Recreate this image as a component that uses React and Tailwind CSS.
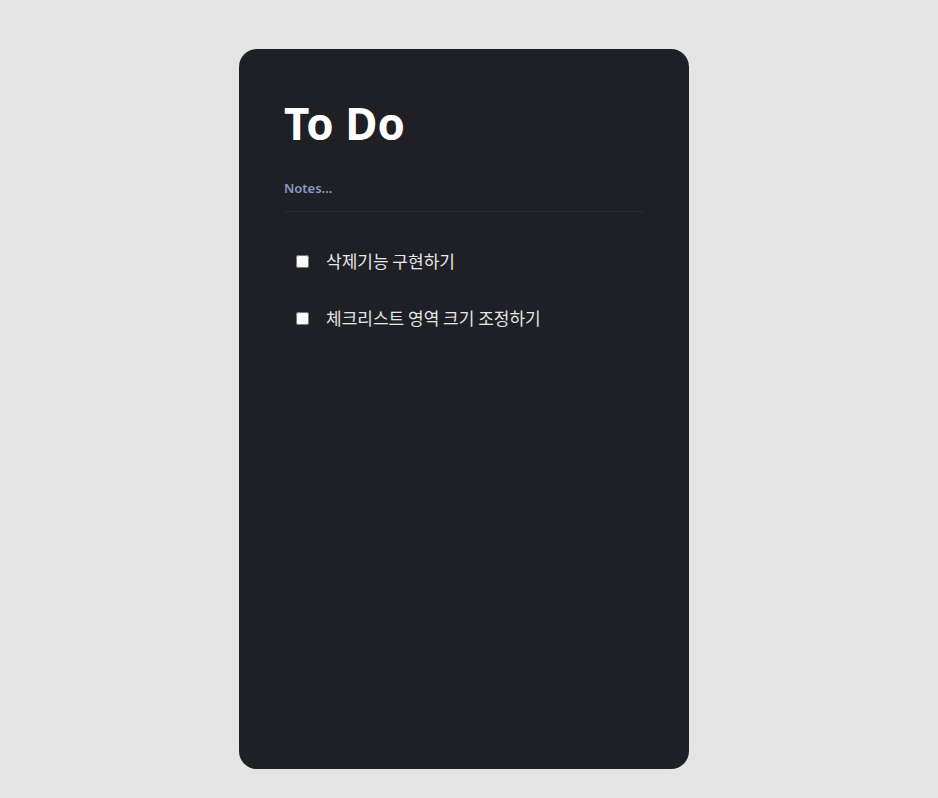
import { useState } from "react";

const initialTodos = [
  { id: 1, text: "삭제기능 구현하기", done: false },
  { id: 2, text: "체크리스트 영역 크기 조정하기", done: false },
];

export default function App() {
  const [todos, setTodos] = useState(initialTodos);

  const toggle = (id) => {
    setTodos((prev) =>
      prev.map((t) => (t.id === id ? { ...t, done: !t.done } : t))
    );
  };

  return (
    <div
      className="min-h-[798px] bg-[#e4e4e4] pt-[49px] pr-[10px]"
      style={{ fontFamily: '"Noto Sans", "Noto Sans CJK KR", sans-serif' }}
    >
      <div className="mx-auto w-[450px] h-[720px] rounded-[18px] bg-[#1f2025] px-[45px] pt-[49px]">
        <h1 className="text-[44px] leading-[50px] font-bold text-white">
          To Do
        </h1>
        <div className="mt-[31px] pb-[14px] border-b border-[#2a2b31]">
          <p className="text-[13px] leading-[18px] font-semibold text-[#8a99c4]">
            Notes...
          </p>
        </div>
        <ul className="mt-[38px] flex flex-col gap-[35px] pl-[12px]">
          {todos.map((todo) => (
            <li key={todo.id} className="flex items-center h-[22px]">
              <input
                type="checkbox"
                checked={todo.done}
                onChange={() => toggle(todo.id)}
                className="w-[13px] h-[13px] m-0"
              />
              <span
                className="ml-[17px] text-[17px] text-[#e6e6e6]"
                style={{ fontFamily: '"Noto Sans CJK KR", sans-serif' }}
              >
                {todo.text}
              </span>
            </li>
          ))}
        </ul>
      </div>
    </div>
  );
}
